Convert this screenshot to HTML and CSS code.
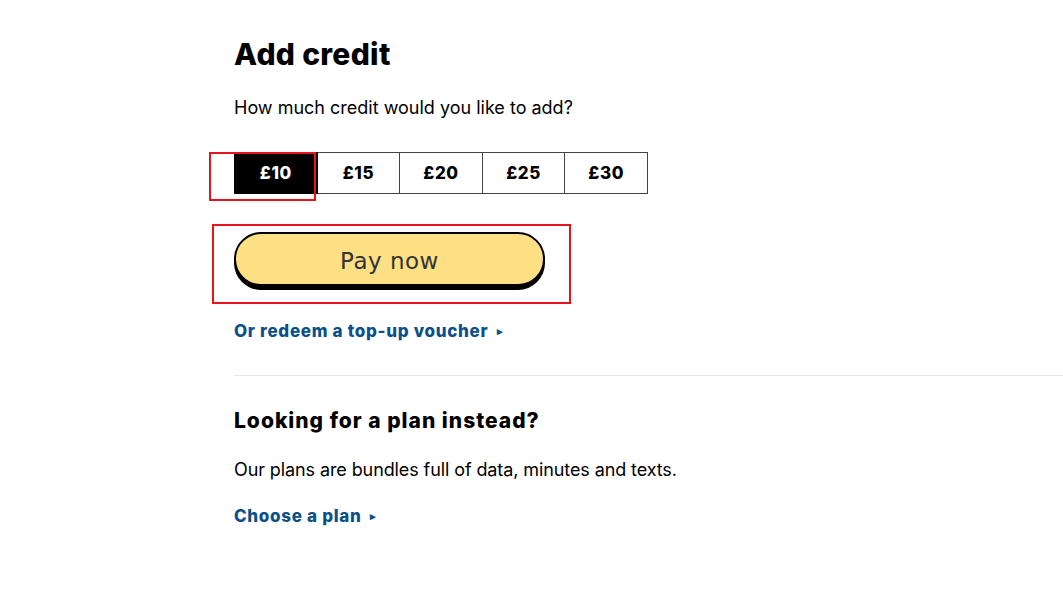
FILE: index.html
```html
<!DOCTYPE html>
<html lang="en">
<head>
  <meta charset="UTF-8" />
  <title>Add credit</title>
  <link rel="stylesheet" href="styles.css">
</head>
<body>
  <main class="page">
    <section class="credit">
      <h1>Add credit</h1>
      <p class="lead">How much credit would you like to add?</p>

      <div class="amounts">
        <button class="amount selected">£10</button>
        <button class="amount">£15</button>
        <button class="amount">£20</button>
        <button class="amount">£25</button>
        <button class="amount">£30</button>
        <span class="mark mark-amount"></span>
      </div>

      <div class="pay-wrap">
        <button class="pay">Pay now</button>
        <span class="mark mark-pay"></span>
      </div>

      <a class="link" href="#">Or redeem a top-up voucher <span class="arrow">&#9656;</span></a>
    </section>

    <hr class="divider">

    <section class="plans">
      <h2>Looking for a plan instead?</h2>
      <p class="lead">Our plans are bundles full of data, minutes and texts.</p>
      <a class="link" href="#">Choose a plan <span class="arrow">&#9656;</span></a>
    </section>
  </main>
</body>
</html>
```

FILE: styles.css
```css
* {
  box-sizing: border-box;
  margin: 0;
  padding: 0;
}
body {
  font-family: Inter, "Liberation Sans", sans-serif;
  background: #fff;
  color: #000;
}
.page {
  padding: 37px 0 0 234px;
}
h1 {
  font-size: 30px;
  font-weight: 800;
  line-height: 34px;
  letter-spacing: 0.3px;
}
h2 {
  font-size: 21px;
  font-weight: 800;
  line-height: 26px;
  letter-spacing: 1px;
}
.lead {
  font-size: 18px;
  line-height: 22px;
}
.credit .lead {
  margin-top: 26px;
}
.amounts {
  position: relative;
  display: flex;
  margin-top: 33px;
  width: 414px;
}
.amount {
  flex: 1;
  height: 42px;
  border: 1px solid #444;
  border-left: none;
  background: #fff;
  font-family: inherit;
  font-size: 17px;
  font-weight: 800;
  letter-spacing: 0.6px;
  color: #000;
}
.amount:first-child {
  border-left: 1px solid #444;
}
.amount.selected {
  background: #000;
  border-color: #000;
  color: #fff;
}
.mark {
  position: absolute;
  border: 2px solid #e8141c;
  pointer-events: none;
}
.mark-amount {
  left: -25px;
  top: 0;
  width: 107px;
  height: 49px;
}
.pay-wrap {
  position: relative;
  margin-top: 38px;
  width: 311px;
}
.pay {
  display: block;
  width: 311px;
  height: 54px;
  padding-top: 3px;
  border: 2px solid #000;
  border-radius: 27px;
  background: #fddf84;
  box-shadow: 0 4px 0 #000;
  font-family: "DejaVu Sans", sans-serif;
  font-size: 23px;
  font-weight: 500;
  color: #333;
  letter-spacing: 0.5px;
}
.mark-pay {
  left: -22px;
  top: -8px;
  width: 359px;
  height: 80px;
}
.link {
  display: inline-block;
  margin-top: 35px;
  font-size: 17px;
  font-weight: 800;
  line-height: 20px;
  letter-spacing: 0.7px;
  color: #0b5088;
  text-decoration: none;
}
.arrow {
  font-size: 11px;
  margin-left: 4px;
  vertical-align: 2px;
}
.divider {
  border: none;
  border-top: 1px solid #e6e6e6;
  margin-top: 34px;
}
.plans {
  padding-top: 32px;
}
.plans .lead {
  margin-top: 25px;
  letter-spacing: -0.1px;
}
.plans .link {
  margin-top: 25px;
}
```
